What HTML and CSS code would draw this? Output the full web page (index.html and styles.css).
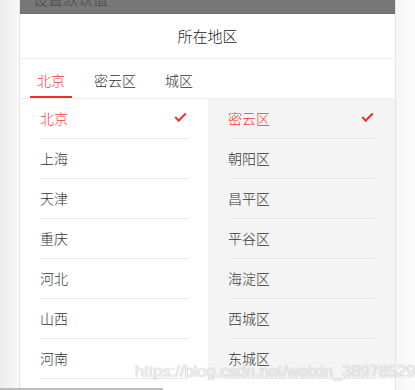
FILE: index.html
```html
<!DOCTYPE html>
<html lang="zh-Hans">
<head>
    <meta charset="utf-8">
    <meta name="viewport" content="width=device-width,initial-scale=1.0">
    <link rel="stylesheet" href="styles.css">
    <title>所在地区</title>
</head>
<body>
    <div class="panel">
        <div class="mask"><span>设置默认值</span></div>
        <div class="title">所在地区</div>
        <div class="tabs">
            <div class="tab active">北京</div>
            <div class="tab">密云区</div>
            <div class="tab">城区</div>
        </div>
        <div class="columns">
            <ul class="list">
                <li class="item active">北京<span class="check"></span></li>
                <li class="item">上海</li>
                <li class="item">天津</li>
                <li class="item">重庆</li>
                <li class="item">河北</li>
                <li class="item">山西</li>
                <li class="item">河南</li>
            </ul>
            <ul class="list sub">
                <li class="item active">密云区<span class="check"></span></li>
                <li class="item">朝阳区</li>
                <li class="item">昌平区</li>
                <li class="item">平谷区</li>
                <li class="item">海淀区</li>
                <li class="item">西城区</li>
                <li class="item">东城区</li>
            </ul>
        </div>
    </div>
    <div class="watermark">https://blog.csdn.net/weixin_38978529</div>
    <div class="scroll"></div>
</body>
</html>
```

FILE: styles.css
```css
html, body {
    margin: 0;
    height: 100%;
}

body {
    background: linear-gradient(to right, #ececec, #f9f9f9 20px, #f6f6f6 395px, #fbfbfb);
    display: flex;
    justify-content: center;
    font-family: "Noto Sans CJK SC", "Liberation Sans", sans-serif;
    font-size: 14px;
    font-weight: 300;
    color: #333;
    overflow: hidden;
}

.panel {
    width: 375px;
    height: 390px;
    background: #fff;
    border-left: 1px solid #e4e4e4;
    border-right: 1px solid #e4e4e4;
    overflow: hidden;
}

.mask {
    height: 14px;
    background: #777;
    border-bottom: 1px solid #707070;
    box-sizing: border-box;
    overflow: hidden;
    padding-left: 13px;
    line-height: 14px;
}

.mask span {
    display: block;
    margin-top: -8px;
    font-size: 15px;
    color: #4a4a4a;
}

.title {
    height: 44px;
    line-height: 44px;
    text-align: center;
    font-size: 15px;
    color: #222;
    border-bottom: 1px solid #eee;
}

.tabs {
    display: flex;
    gap: 15px;
    padding: 0 10px;
    height: 39px;
    border-bottom: 1px solid #eee;
}

.tab {
    padding: 0 7px;
    line-height: 42px;
    height: 39px;
    box-sizing: border-box;
}

.tab.active {
    color: #f23a3a;
    border-bottom: 2px solid #f03030;
}

.columns {
    display: flex;
}

.list {
    list-style: none;
    margin: 0;
    padding: 0;
    width: 188px;
    background: #fff;
}

.list.sub {
    width: 187px;
    background: #f4f4f4;
}

.item {
    margin: 0 20px;
    height: 40px;
    padding-bottom: 1px;
    box-sizing: border-box;
    border-bottom: 1px solid #e8e8e8;
    display: flex;
    justify-content: space-between;
    align-items: center;
    color: #333;
}

.item.active {
    color: #f23a3a;
}

.check {
    width: 9px;
    height: 4px;
    border-left: 2.5px solid #f03030;
    border-bottom: 2.5px solid #f03030;
    transform: rotate(-45deg);
    margin: -4px 2px 0 0;
}

.watermark {
    position: absolute;
    left: 135px;
    top: 362px;
    font-family: "Liberation Sans", sans-serif;
    font-size: 16.5px;
    color: rgba(255, 255, 255, 0.85);
    text-shadow: 0 0 1px rgba(0, 0, 0, 0.4);
}

.scroll {
    position: absolute;
    left: 0;
    bottom: 0;
    width: 163px;
    height: 2px;
    background: #bdbdbd;
}
```
